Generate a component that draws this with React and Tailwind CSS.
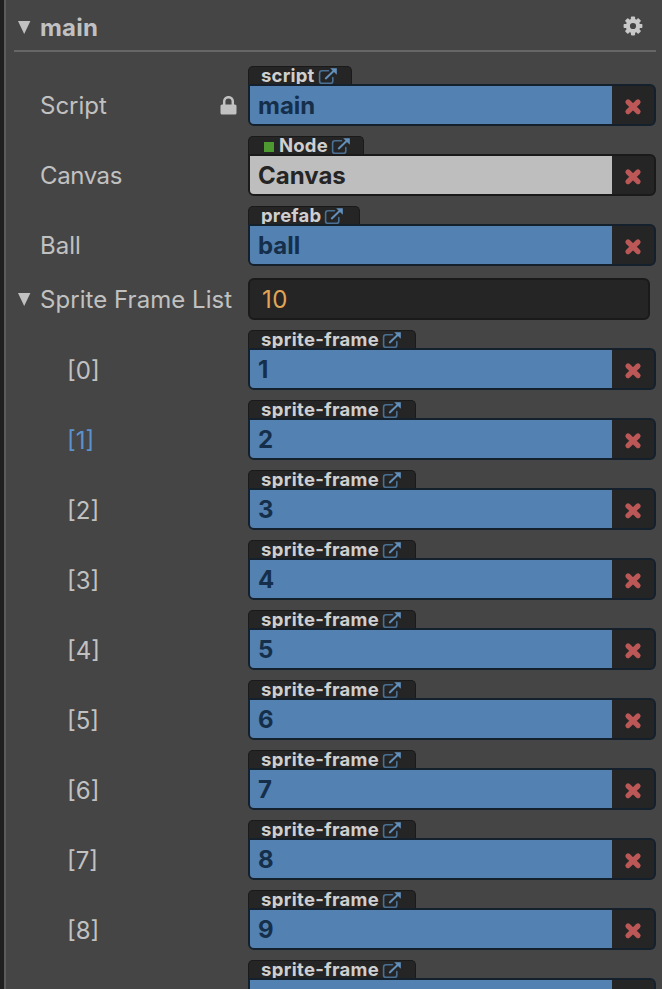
import React from "react";

function LinkIcon() {
  return (
    <svg className="h-[18px] w-[20px] shrink-0" viewBox="0 0 20 18" fill="none">
      <path d="M10.5 3.8H4A2.4 2.4 0 0 0 1.6 6.2v7.8a2.4 2.4 0 0 0 2.4 2.4h8.4a2.4 2.4 0 0 0 2.4-2.4V10.5" stroke="#4a7094" strokeWidth="1.6" strokeLinecap="round" />
      <path d="M7.8 11.4 15.6 4" stroke="#6390bb" strokeWidth="2" strokeLinecap="round" />
      <path d="M12.2 1.2h6.6v6.6Z" fill="#6390bb" />
    </svg>
  );
}

function CrossIcon() {
  return (
    <svg className="h-[18px] w-[18px]" viewBox="0 0 18 18">
      <path d="M4 4l10 9.6M14 4L4 13.6" stroke="#bb5857" strokeWidth="5.2" strokeLinecap="round" />
    </svg>
  );
}

function LockIcon() {
  return (
    <svg className="h-5 w-[17px]" viewBox="0 0 17 20">
      <path d="M4.2 10V5.5a4.3 4.3 0 0 1 8.6 0V10" fill="none" stroke="#c1c1c1" strokeWidth="2.5" />
      <rect x="0.5" y="8.5" width="16" height="10" rx="1.5" fill="#c1c1c1" />
    </svg>
  );
}

function GearIcon() {
  return (
    <svg className="h-5 w-5" viewBox="0 0 20 20" fill="#c8c8c8">
      {[0, 45, 90, 135].map((a) => (
        <rect key={a} x="7.9" y="0.6" width="4.2" height="18.8" rx="0.8" transform={`rotate(${a} 10 10)`} />
      ))}
      <circle cx="10" cy="10" r="7.2" />
      <circle cx="10" cy="10" r="3.1" fill="#454545" />
    </svg>
  );
}

function Arrow() {
  return (
    <svg className="h-[13px] w-[13px] shrink-0" viewBox="0 0 13 13">
      <path d="M0 0h12.4L6.2 13Z" fill="#c1c1c1" />
    </svg>
  );
}

function Field({ label, type, value, tab, node, locked, active, nested }) {
  return (
    <div className="mb-[10px] flex h-[60px] shrink-0">
      <div className={`flex h-10 w-[242px] shrink-0 items-center justify-between self-end pr-[11px] ${nested ? "pl-[61px]" : "pl-[34px]"}`}>
        <span className={active ? "pt-[2px] text-[#5a92cc]" : nested ? "pt-[2px]" : label === "Canvas" ? "tracking-[-0.4px]" : ""}>{label}</span>
        {locked && <LockIcon />}
      </div>
      <div className="flex w-[408px] flex-col">
        <div className={`flex h-[18px] items-center rounded-t-[5px] border-x border-t border-[#1a1a1a] bg-[#252525] pl-[12px] text-[18.5px] leading-[18px] font-bold text-[#cfcfcf] ${tab}`}>
          {node && <span className="mt-[2px] mr-[5px] ml-[3px] h-[10px] w-[10px] shrink-0 bg-[#4c9a30]" />}
          <span className={`-mt-px ${nested ? "mr-[3px] tracking-[0.32px]" : "mr-[3px] tracking-[0.2px]"}`}>{type}</span>
          <LinkIcon />
        </div>
        <div className={`flex h-[42px] overflow-hidden rounded-r-[6px] rounded-bl-[6px] border-2 bg-[#252525] ${node ? "border-[#1a1a1a]" : "border-[#14202c]"}`}>
          <div className={`flex w-[362px] shrink-0 items-center pt-[2px] pl-2 font-bold ${node ? "bg-[#bebebe] text-[#252525]" : "bg-[#5381b1] text-[#152f4a]"}`}>{value}</div>
          <div className="flex flex-1 items-center justify-center bg-[#252525] pt-[3px]">
            <CrossIcon />
          </div>
        </div>
      </div>
    </div>
  );
}

export default function App() {
  return (
    <div className="flex h-[989px] w-[662px] overflow-hidden bg-[#454545] font-['Inter','Liberation_Sans',sans-serif] text-[24px] leading-none font-[430] whitespace-nowrap text-[#c1c1c1]">
      <div className="w-[6px] shrink-0 border-r-2 border-[#5b5b5b] bg-[#202020]" />
      <div className="flex flex-1 flex-col">
        <div className="mr-[6px] mb-[14px] ml-2 flex h-[52px] shrink-0 items-center border-b-2 border-[#666666] pr-[13px] pl-1">
          <div className="pt-[4px]"><Arrow /></div>
          <span className="ml-[9px] flex-1 pt-[5px] font-bold tracking-[0.2px]">main</span>
          <div className="pt-[2px]"><GearIcon /></div>
        </div>
        <Field label="Script" type="script" value="main" tab="w-[104px]" locked />
        <Field label="Canvas" type="Node" value="Canvas" tab="w-[116px]" node />
        <Field label="Ball" type="prefab" value="ball" tab="w-[112px]" />
        <div className="mb-[10px] flex h-[44px] shrink-0 items-center pt-[2px]">
          <div className="flex w-[242px] shrink-0 items-center pl-3">
            <Arrow />
            <span className="ml-[9px] pt-[2px] tracking-[0.05px]">Sprite Frame List</span>
          </div>
          <div className="flex h-[42px] w-[402px] items-center rounded-[6px] border-2 border-[#1a1a1a] bg-[#252525] pt-[2px] pl-3 tracking-[0.4px] text-[#e0a555]">10</div>
        </div>
        {[1, 2, 3, 4, 5, 6, 7, 8, 9, 10].map((n) => (
          <Field key={n} label={`[${n - 1}]`} type="sprite-frame" value={n} tab="w-[168px]" active={n === 2} nested />
        ))}
      </div>
    </div>
  );
}
